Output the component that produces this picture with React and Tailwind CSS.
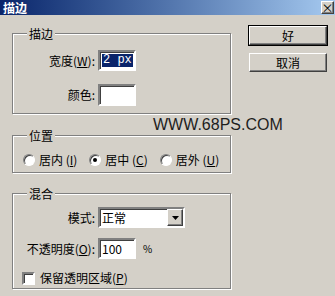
import React from 'react';

const sunken =
  'border-2 border-t-[#808080] border-l-[#808080] border-b-white border-r-white shadow-[inset_1px_1px_0_#404040] bg-white';
const raised =
  'bg-[#d4d0c8] border border-t-white border-l-white border-b-[#404040] border-r-[#404040] shadow-[inset_-1px_-1px_0_#808080]';

const Group = ({ label, className, children }) => (
  <div
    className={`relative border border-[#808080] shadow-[inset_1px_1px_0_#ffffff,1px_1px_0_#ffffff] ${className}`}
  >
    <span className="absolute left-[14px] top-[-7px] bg-[#d4d0c8] px-[2px] leading-[13px]">{label}</span>
    {children}
  </div>
);

const Radio = ({ checked, children }) => (
  <label className="flex items-center gap-[4px]">
    <span className="relative h-[12px] w-[12px] rounded-full border border-t-[#808080] border-l-[#808080] border-b-white border-r-white bg-white shadow-[inset_1px_1px_0_#404040]">
      {checked && <span className="absolute left-[3px] top-[3px] h-[4px] w-[4px] rounded-full bg-black" />}
    </span>
    <span>{children}</span>
  </label>
);

const Btn = ({ children, isDefault }) => (
  <div className={isDefault ? 'border border-black' : 'border border-transparent'}>
    <div className={`${raised} flex h-[19px] w-[78px] items-center justify-center`}>{children}</div>
  </div>
);

export default function App() {
  return (
    <div
      className="relative h-[296px] w-[335px] overflow-hidden bg-[#d4d0c8] text-[12px] leading-[14px] text-black"
      style={{ fontFamily: '"Noto Sans CJK SC", "Liberation Sans", sans-serif' }}
    >
      <div className="flex h-[15px] items-center justify-between bg-gradient-to-r from-[#0a246a] to-[#a6caf0] pl-[3px] pr-[1px]">
        <span className="text-[12px] font-bold leading-[15px] text-white">描边</span>
        <div className={`${raised} flex h-[13px] w-[13px] items-center justify-center text-[12px] leading-none`}>
          ×
        </div>
      </div>

      <div className="flex pl-[12px]">
        <div className="w-[219px]">
          <Group label="描边" className="mt-[18px] h-[81px]">
            <div className="flex items-center pt-[16px]">
              <span className="w-[85px] pr-[3px] text-right">
                宽度(<u>W</u>):
              </span>
              <div className={`${sunken} flex h-[21px] w-[38px] items-center pl-[2px]`}>
                <span
                  className="bg-[#0a246a] px-[1px] text-[12px] leading-[13px] text-white"
                  style={{ fontFamily: '"Liberation Mono", monospace' }}
                >
                  2 px
                </span>
              </div>
            </div>
            <div className="mt-[13px] flex items-center">
              <span className="w-[85px] pr-[3px] text-right">颜色:</span>
              <div className={`${sunken} h-[22px] w-[38px]`} />
            </div>
          </Group>

          <Group label="位置" className="mt-[21px] h-[38px]">
            <div className="flex items-center gap-[12px] pl-[10px] pt-[17px]">
              <Radio>
                居内 (<u>I</u>)
              </Radio>
              <Radio checked>
                居中 (<u>C</u>)
              </Radio>
              <Radio>
                居外 (<u>U</u>)
              </Radio>
            </div>
          </Group>

          <Group label="混合" className="mt-[20px] h-[96px]">
            <div className="flex items-center pt-[13px]">
              <span className="w-[85px] pr-[3px] text-right">模式:</span>
              <div className={`${sunken} flex h-[21px] w-[87px] items-center justify-between`}>
                <span className="pl-[2px]">正常</span>
                <div className={`${raised} flex h-[17px] w-[16px] items-center justify-center`}>
                  <svg width="7" height="4" viewBox="0 0 7 4">
                    <path d="M0 0h7L3.5 4z" fill="#000" />
                  </svg>
                </div>
              </div>
            </div>
            <div className="mt-[10px] flex items-center">
              <span className="w-[85px] pr-[3px] text-right">
                不透明度(<u>O</u>):
              </span>
              <div className={`${sunken} flex h-[21px] w-[38px] items-center pl-[2px]`}>100</div>
              <span className="ml-[7px] text-[10px]">%</span>
            </div>
            <div className="mt-[12px] flex items-center gap-[5px] pl-[9px]">
              <span className={`${sunken} h-[13px] w-[13px]`} />
              <span>
                保留透明区域(<u>P</u>)
              </span>
            </div>
          </Group>
        </div>

        <div className="ml-[17px] mt-[10px] flex flex-col gap-[6px]">
          <Btn isDefault>好</Btn>
          <Btn>取消</Btn>
        </div>
      </div>

      <span
        className="absolute left-[153px] top-[116px] text-[16px] leading-[18px] text-[#1e1e1e]"
        style={{ fontFamily: '"Liberation Sans", Arial, sans-serif' }}
      >
        WWW.68PS.COM
      </span>
    </div>
  );
}
